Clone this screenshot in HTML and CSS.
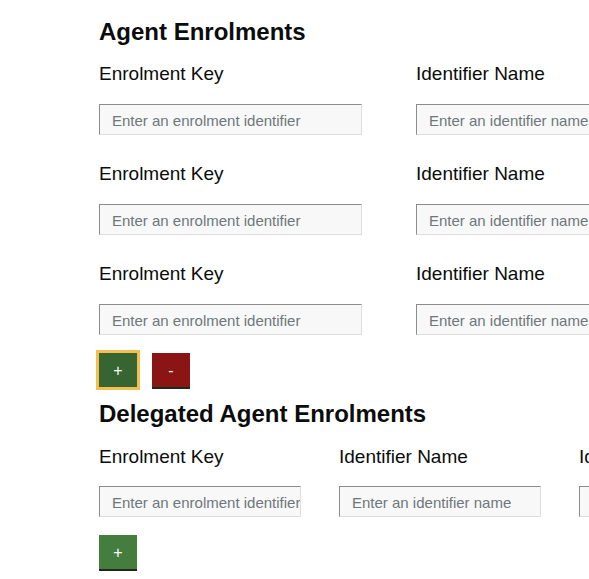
FILE: index.html
```html
<!DOCTYPE html>
<html lang="en">
<head>
<meta charset="utf-8">
<title>Agent Enrolments</title>
<link rel="stylesheet" href="styles.css">
</head>
<body>
<main class="page">
  <section class="section">
    <h1 class="heading">Agent Enrolments</h1>
    <div class="rows rows-two">
      <div class="field">
        <label class="label">Enrolment Key</label>
        <input class="input input-wide" type="text" placeholder="Enter an enrolment identifier">
      </div>
      <div class="field">
        <label class="label">Identifier Name</label>
        <input class="input input-wide" type="text" placeholder="Enter an identifier name">
      </div>
      <div class="field">
        <label class="label">Enrolment Key</label>
        <input class="input input-wide" type="text" placeholder="Enter an enrolment identifier">
      </div>
      <div class="field">
        <label class="label">Identifier Name</label>
        <input class="input input-wide" type="text" placeholder="Enter an identifier name">
      </div>
      <div class="field">
        <label class="label">Enrolment Key</label>
        <input class="input input-wide" type="text" placeholder="Enter an enrolment identifier">
      </div>
      <div class="field">
        <label class="label">Identifier Name</label>
        <input class="input input-wide" type="text" placeholder="Enter an identifier name">
      </div>
    </div>
    <div class="actions">
      <button class="btn btn-add is-focused" type="button">+</button>
      <button class="btn btn-remove" type="button">-</button>
    </div>
  </section>
  <section class="section section-delegated">
    <h2 class="heading heading-delegated">Delegated Agent Enrolments</h2>
    <div class="rows rows-three">
      <div class="field">
        <label class="label">Enrolment Key</label>
        <input class="input input-narrow" type="text" placeholder="Enter an enrolment identifier">
      </div>
      <div class="field">
        <label class="label">Identifier Name</label>
        <input class="input input-narrow" type="text" placeholder="Enter an identifier name">
      </div>
      <div class="field">
        <label class="label">Identifier Type</label>
        <input class="input input-narrow" type="text" placeholder="Enter an identifier type">
      </div>
    </div>
    <div class="actions actions-delegated">
      <button class="btn btn-add" type="button">+</button>
    </div>
  </section>
</main>
</body>
</html>
```
FILE: styles.css
```css
html, body {
  margin: 0;
  padding: 0;
  overflow: hidden;
  background: #ffffff;
}

body {
  font-family: "Liberation Sans", Arial, sans-serif;
  color: #0b0c0c;
}

.page {
  padding-left: 99px;
  width: 1000px;
}

.heading {
  margin: 0;
  font-size: 24px;
  line-height: 28px;
  font-weight: 700;
  color: #0b0c0c;
}

.section > .heading {
  padding-top: 18px;
}

.section-delegated > .heading {
  padding-top: 11px;
}

.rows {
  display: grid;
  row-gap: 28px;
  margin-top: 17px;
}

.rows-two {
  grid-template-columns: 317px 317px;
}

.rows-three {
  grid-template-columns: 240px 240px 240px;
  margin-top: 18px;
}

.field {
  display: flex;
  flex-direction: column;
  align-items: flex-start;
}

.label {
  font-size: 19px;
  line-height: 22px;
  margin-bottom: 19px;
}

.rows-three .label {
  margin-bottom: 18px;
}

.input {
  box-sizing: border-box;
  height: 31px;
  padding: 7px 0 5px 12px;
  font-family: "Liberation Sans", Arial, sans-serif;
  font-size: 15px;
  color: #0b0c0c;
  background: #f8f8f8;
  border: 1px solid #dedede;
  border-top-color: #8c8c8c;
  border-left-color: #8c8c8c;
  border-radius: 0;
  outline: none;
}

.input::placeholder {
  color: #6f777b;
  opacity: 1;
}

.input-wide {
  width: 263px;
}

.input-narrow {
  width: 202px;
}

.actions {
  display: flex;
  gap: 15px;
  margin-top: 18px;
  align-items: flex-start;
}

.actions-delegated {
  margin-top: 18px;
}

.btn {
  box-sizing: border-box;
  width: 38px;
  height: 36px;
  padding: 2px 0 0;
  border: 0;
  border-bottom: 2px solid #1c2b17;
  border-radius: 0;
  color: #ffffff;
  font-family: "Liberation Sans", Arial, sans-serif;
  font-size: 16px;
  line-height: 32px;
  cursor: pointer;
}

.btn-add {
  background: #457d3f;
}

.btn-remove {
  background: #8b1414;
}

.btn.is-focused {
  background: #366532;
  height: 34px;
  border-bottom: 0;
  outline: 3px solid #f4bf52;
  outline-offset: 0;
}
```
